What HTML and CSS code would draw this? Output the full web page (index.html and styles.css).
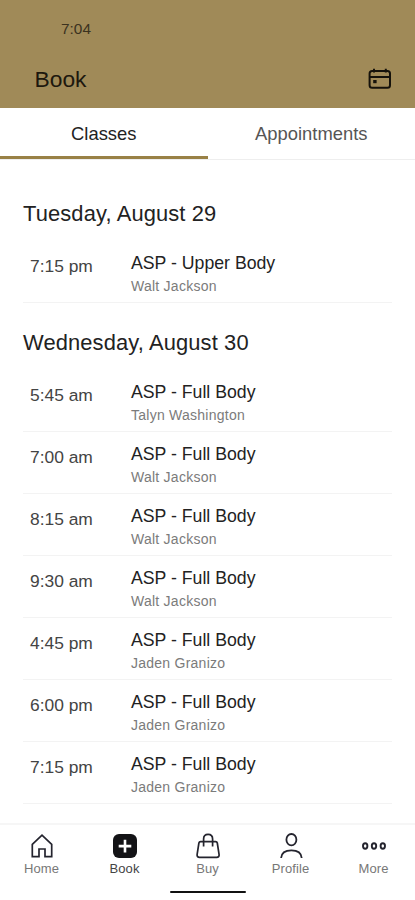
FILE: index.html
```
<!DOCTYPE html>
<html lang="en">
<head>
  <meta charset="UTF-8" />
  <meta name="viewport" content="width=device-width, initial-scale=1.0"/>
  <title>Book</title>
  <link rel="stylesheet" href="styles.css">
</head>
<body>
  <header>
    <div class="clock">7:04</div>
    <div class="title-bar">
      <h1>Book</h1>
      <svg class="calendar" width="24" height="22" viewBox="0 0 24 22" fill="none" stroke="#15120b" stroke-width="2">
        <rect x="1.6" y="3" width="20.4" height="16.8" rx="2.5"/>
        <path d="M1.6 9h20.4M6 .8v3.6M17.8 .8v3.6"/>
        <rect x="5.2" y="12" width="3.4" height="3.2" fill="#15120b" stroke="none"/>
      </svg>
    </div>
  </header>
  <div class="tabs">
    <div class="tab active">Classes</div>
    <div class="tab">Appointments</div>
  </div>
  <main>
    <h2>Tuesday, August 29</h2>
    <div class="row">
      <div class="time">7:15 pm</div>
      <div><div class="name">ASP - Upper Body</div><div class="coach">Walt Jackson</div></div>
    </div>
    <h2>Wednesday, August 30</h2>
    <div class="row">
      <div class="time">5:45 am</div>
      <div><div class="name">ASP - Full Body</div><div class="coach">Talyn Washington</div></div>
    </div>
    <div class="row">
      <div class="time">7:00 am</div>
      <div><div class="name">ASP - Full Body</div><div class="coach">Walt Jackson</div></div>
    </div>
    <div class="row">
      <div class="time">8:15 am</div>
      <div><div class="name">ASP - Full Body</div><div class="coach">Walt Jackson</div></div>
    </div>
    <div class="row">
      <div class="time">9:30 am</div>
      <div><div class="name">ASP - Full Body</div><div class="coach">Walt Jackson</div></div>
    </div>
    <div class="row">
      <div class="time">4:45 pm</div>
      <div><div class="name">ASP - Full Body</div><div class="coach">Jaden Granizo</div></div>
    </div>
    <div class="row">
      <div class="time">6:00 pm</div>
      <div><div class="name">ASP - Full Body</div><div class="coach">Jaden Granizo</div></div>
    </div>
    <div class="row">
      <div class="time">7:15 pm</div>
      <div><div class="name">ASP - Full Body</div><div class="coach">Jaden Granizo</div></div>
    </div>
  </main>
  <nav>
    <div class="item">
      <svg width="26" height="28" viewBox="0 0 26 28" fill="none" stroke="#24242e" stroke-width="1.7">
        <path d="M3.3 12.4L13 3.2l9.7 9.2V24.6H16V17h-6v7.6H3.3z"/>
      </svg>
      <span>Home</span>
    </div>
    <div class="item current">
      <svg width="26" height="28" viewBox="0 0 26 28">
        <rect x="1" y="2" width="24" height="24" rx="6" fill="#131316"/>
        <path d="M13 7.8v12.6M6.7 14.1h12.6" stroke="#fff" stroke-width="2.6"/>
      </svg>
      <span>Book</span>
    </div>
    <div class="item">
      <svg width="26" height="28" viewBox="0 0 26 28" fill="none" stroke="#24242e" stroke-width="1.7">
        <path d="M5.6 9.6h15c1 0 1.5.5 1.7 1.4l1.8 11.5c.2 1.8-.7 2.9-2.4 2.9H4.5c-1.7 0-2.6-1.1-2.4-2.9L3.9 11c.2-.9.7-1.4 1.7-1.4z"/>
        <path d="M8.6 14.6V7c0-3 1.8-4.7 4.5-4.7s4.5 1.7 4.5 4.7v7.6"/>
      </svg>
      <span>Buy</span>
    </div>
    <div class="item">
      <svg width="26" height="28" viewBox="0 0 26 28" fill="none" stroke="#24242e" stroke-width="1.8">
        <ellipse cx="13.4" cy="7.7" rx="5" ry="5.7"/>
        <path d="M3.1 26c.4-5 4.1-7.600 10.300-7.600S23.300 21 23.700 26"/>
      </svg>
      <span>Profile</span>
    </div>
    <div class="item">
      <svg width="26" height="28" viewBox="0 0 26 28" fill="none" stroke="#24242e" stroke-width="1.9">
        <ellipse cx="4.2" cy="14" rx="2.2" ry="2.7"/>
        <ellipse cx="13" cy="14" rx="2.2" ry="2.7"/>
        <ellipse cx="21.8" cy="14" rx="2.2" ry="2.7"/>
      </svg>
      <span>More</span>
    </div>
  </nav>
  <div class="home-bar"></div>
</body>
</html>
```

FILE: styles.css
```
:root {
  --gold: #a08a58;
  --text: #222;
  --muted: #7b7b7b;
  --line: #f3f3f3;
}
* {
  box-sizing: border-box;
}
body {
  font-family: "Liberation Sans", Arial, sans-serif;
  margin: 0;
  height: 900px;
  overflow: hidden;
  background: #fff;
  color: var(--text);
  display: flex;
  flex-direction: column;
}
header {
  height: 108px;
  background: var(--gold);
  flex: none;
}
.clock {
  padding: 19px 0 0 61px;
  font-size: 15.4px;
  line-height: 19px;
  color: #3b321f;
}
.title-bar {
  display: flex;
  justify-content: space-between;
  align-items: center;
  height: 30px;
  margin-top: 26px;
  padding: 0 23px 0 34.5px;
}
h1 {
  margin: 0;
  font-size: 22.8px;
  font-weight: 400;
  line-height: 24px;
  color: #1d180e;
}
.tabs {
  display: flex;
  flex: none;
  height: 52px;
  border-bottom: 1px solid #eee;
}
.tab {
  flex: 1;
  height: 51px;
  text-align: center;
  font-size: 18.4px;
  line-height: 52px;
  color: #555;
}
.tab.active {
  color: var(--text);
  border-bottom: 3px solid #998146;
}
main {
  flex: 1;
  padding: 27px 23px 0;
}
h2 {
  margin: 0;
  height: 54px;
  font-size: 21.9px;
  font-weight: 400;
  line-height: 54px;
  letter-spacing: 0.13px;
}
.row {
  display: grid;
  grid-template-columns: 101px 1fr;
  height: 61.95px;
  padding: 12px 0 0 7px;
  border-bottom: 1px solid var(--line);
}
.row + h2 {
  height: 67px;
  line-height: 80px;
}
.time {
  font-size: 17.4px;
  line-height: 27px;
  color: #444;
}
.name {
  font-size: 17.7px;
  line-height: 21px;
}
.coach {
  margin-top: 3px;
  font-size: 14px;
  line-height: 18px;
  letter-spacing: 0.25px;
  color: var(--muted);
}
nav {
  display: grid;
  grid-template-columns: repeat(5, 1fr);
  flex: none;
  height: 67px;
  padding-top: 7px;
  border-top: 2px solid #f6f6f6;
}
.item {
  display: flex;
  flex-direction: column;
  align-items: center;
  font-size: 13px;
  line-height: 17px;
  letter-spacing: 0.1px;
  color: #777;
}
.item.current {
  color: #444;
}
.home-bar {
  flex: none;
  width: 76px;
  height: 2px;
  margin: 1px auto 7px;
  border-radius: 1px;
  background: #111;
}
```
